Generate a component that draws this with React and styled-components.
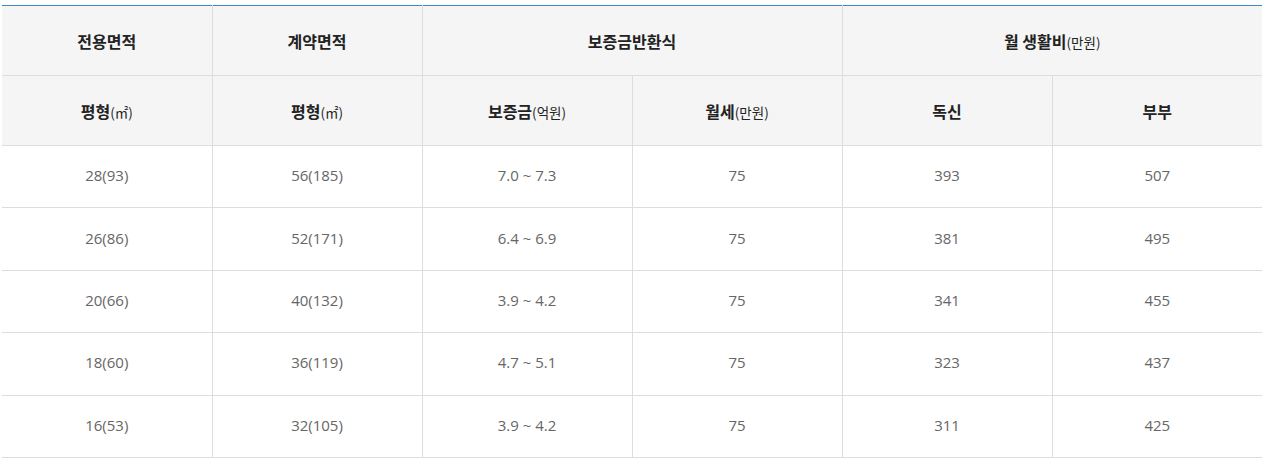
import React from "react";
import styled, { createGlobalStyle } from "styled-components";

const GlobalStyle = createGlobalStyle`
  body {
    margin: 0;
    background: #fff;
    font-family: "Open Sans", "Noto Sans CJK KR", sans-serif;
  }
`;

const Wrapper = styled.div`
  padding: 5px 2px 0 2px;
`;

const Table = styled.table`
  width: 1260px;
  border-collapse: collapse;
  table-layout: fixed;
  border-top: 1px solid #3b8ad0;
`;

const HeadCell = styled.th`
  height: 69px;
  padding: 0;
  background: #f5f5f5;
  color: #222;
  font-family: "Noto Sans CJK KR", sans-serif;
  font-size: 16px;
  font-weight: 700;
  text-align: center;
  vertical-align: middle;
  border-bottom: 1px solid #ddd;
  border-left: ${(p) => (p.$first ? "none" : "1px solid #ddd")};
`;

const Unit = styled.span`
  font-size: 13.5px;
  font-weight: 400;
`;

const Cell = styled.td`
  height: 58.4px;
  padding: 0 0 3px 0;
  color: #666;
  font-size: 15px;
  text-align: center;
  vertical-align: middle;
  border-bottom: 1px solid #ddd;
  border-left: ${(p) => (p.$first ? "none" : "1px solid #ddd")};
`;

const rows = [
  ["28(93)", "56(185)", "7.0 ~ 7.3", "75", "393", "507"],
  ["26(86)", "52(171)", "6.4 ~ 6.9", "75", "381", "495"],
  ["20(66)", "40(132)", "3.9 ~ 4.2", "75", "341", "455"],
  ["18(60)", "36(119)", "4.7 ~ 5.1", "75", "323", "437"],
  ["16(53)", "32(105)", "3.9 ~ 4.2", "75", "311", "425"],
];

const App = () => {
  return (
    <Wrapper>
      <GlobalStyle />
      <Table>
        <thead>
          <tr>
            <HeadCell $first>전용면적</HeadCell>
            <HeadCell>계약면적</HeadCell>
            <HeadCell colSpan={2}>보증금반환식</HeadCell>
            <HeadCell colSpan={2}>
              월 생활비<Unit>(만원)</Unit>
            </HeadCell>
          </tr>
          <tr>
            <HeadCell $first>
              평형<Unit>(㎡)</Unit>
            </HeadCell>
            <HeadCell>
              평형<Unit>(㎡)</Unit>
            </HeadCell>
            <HeadCell>
              보증금<Unit>(억원)</Unit>
            </HeadCell>
            <HeadCell>
              월세<Unit>(만원)</Unit>
            </HeadCell>
            <HeadCell>독신</HeadCell>
            <HeadCell>부부</HeadCell>
          </tr>
        </thead>
        <tbody>
          {rows.map((r, i) => (
            <tr key={i}>
              {r.map((v, j) => (
                <Cell key={j} $first={j === 0}>
                  {v}
                </Cell>
              ))}
            </tr>
          ))}
        </tbody>
      </Table>
    </Wrapper>
  );
};

export default App;
